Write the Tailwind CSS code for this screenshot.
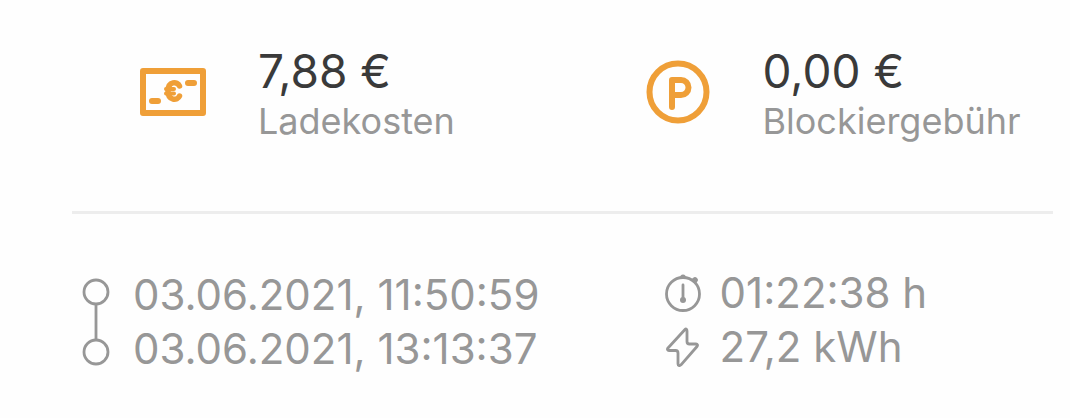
<!DOCTYPE html>
<html lang="de">
<head>
  <meta charset="UTF-8" />
  <meta name="viewport" content="width=device-width, initial-scale=1.0" />
  <title>Ladevorgang</title>
  <script src="https://cdn.jsdelivr.net/npm/@tailwindcss/browser@4"></script>
</head>
<body class="bg-[#fefefe] font-['Inter',sans-serif] text-[#979797]">

  <main class="pl-[72px] pr-[17px] pt-[41px]">
    <!-- Kosten -->
    <section class="grid grid-cols-2 gap-24 pl-[68px] whitespace-nowrap">
      <div class="flex items-center gap-[52px]">
        <svg class="size-[66px] shrink-0" viewBox="0 0 66 66" fill="none" stroke="#ef9f38" stroke-linecap="round" stroke-linejoin="round">
          <rect x="3" y="13" width="60" height="42" stroke-width="6" />
          <path d="M12 43h6M48 25h6" stroke-width="6" />
          <path d="M39.500 28c-2-5-11.500-5-11.500 5s9.500 10 11.500 5" stroke-width="5.500" />
          <path d="M26 31h8M26 35.500h8" stroke-width="4" />
        </svg>
        <div>
          <p class="text-[46px] leading-[60px] text-[#3a3a3a]">7,88 €</p>
          <p class="text-[36px] leading-[40px]">Ladekosten</p>
        </div>
      </div>
      <div class="flex items-center gap-[52px]">
        <svg class="size-[66px] shrink-0" viewBox="0 0 66 66" fill="none" stroke="#ef9f38" stroke-width="6" stroke-linecap="round" stroke-linejoin="round">
          <circle cx="33" cy="34" r="28.500" />
          <path d="M27 49V22h9a7.500 7.500 0 0 1 0 15h-9" />
        </svg>
        <div>
          <p class="text-[46px] leading-[60px] text-[#3a3a3a]">0,00 €</p>
          <p class="text-[36px] leading-[40px]">Blockiergebühr</p>
        </div>
      </div>
    </section>

    <hr class="mt-[70px] border-t-3 border-[#ededed]" />

    <!-- Zeitraum, Dauer und Energie -->
    <section class="grid grid-cols-[3fr_2fr] pl-[10px] pt-[52px] text-[42px] leading-[54px] whitespace-nowrap">
      <div class="flex items-center gap-[23px] pt-0.5">
        <svg class="h-[88px] w-7 shrink-0" viewBox="0 0 28 88" fill="none" stroke="currentColor" stroke-width="2.800">
          <circle cx="14" cy="14" r="12" />
          <path d="M14 26v36" />
          <circle cx="14" cy="74" r="12" />
        </svg>
        <div>
          <p>03.06.2021, 11:50:59</p>
          <p>03.06.2021, 13:13:37</p>
        </div>
      </div>
      <div>
        <div class="flex items-center gap-[15px]">
          <svg class="size-10 shrink-0" viewBox="0 0 40 40" fill="none" stroke="currentColor" stroke-width="2.800" stroke-linecap="round">
            <circle cx="18" cy="21" r="16.500" />
            <path d="M18 12v14" />
            <circle cx="18" cy="27" r="3" fill="currentColor" stroke="none" />
            <path d="M15 5a3 3.500 0 0 1 6 0zM26 6.500l2-1.500a2.800 2.800 0 0 1 4 4l-1.500 2z" fill="currentColor" stroke="none" />
          </svg>
          <p>01:22:38 h</p>
        </div>
        <div class="flex items-center gap-[15px]">
          <svg class="size-10 shrink-0" viewBox="0 0 40 40" fill="none" stroke="currentColor" stroke-width="2.800" stroke-linejoin="round">
            <path d="M20 2.500L3 21C2 22.200 2.500 23.500 4 23.500H10.500Q13 23.500 13 26V37C13 39 14.800 39 16 37.800L32 19.500C33 18 32.500 17 31 17H24.500Q22 17 22 14.500V4C22 2 21 1.400 20 2.500Z" />
          </svg>
          <p>27,2 kWh</p>
        </div>
      </div>
    </section>
  </main>

</body>
</html>
